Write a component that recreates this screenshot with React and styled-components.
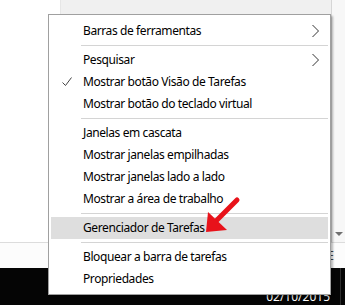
import React from 'react';
import styled, { createGlobalStyle } from 'styled-components';

const GlobalStyle = createGlobalStyle`
  html, body {
    margin: 0;
    padding: 0;
    width: 345px;
    height: 305px;
    overflow: hidden;
    background: #fff;
    font-family: "Noto Sans", "Open Sans", sans-serif;
  }
`;

const Screen = styled.div`
  position: relative;
  width: 345px;
  height: 305px;
  display: flex;
  flex-direction: column;
  overflow: hidden;
`;

const Workspace = styled.div`
  display: flex;
  height: 242px;
  border-bottom: 1px solid #dcdcdc;
`;

const SidePane = styled.div`
  width: 60px;
  background: #fff;
  border-right: 1px solid #e6e6e6;
`;

const MainPane = styled.div`
  flex: 1;
  background: #f0f0f0;
`;

const RightStrip = styled.div`
  width: 13px;
  background: #f7f7f7;
  border-left: 1px solid #d6d6d6;
  display: flex;
  flex-direction: column;
  justify-content: flex-end;
  align-items: center;
  padding-bottom: 3px;
`;

const DropArrow = styled.div`
  width: 0;
  height: 0;
  border-left: 4px solid transparent;
  border-right: 4px solid transparent;
  border-top: 4px solid #707070;
  margin-bottom: 3px;
`;

const StatusStrip = styled.div`
  height: 25px;
  background: #fcfcfc;
  display: flex;
  justify-content: flex-end;
  align-items: center;
  padding-right: 11px;
  font-size: 12px;
  color: #444;
`;

const Taskbar = styled.div`
  flex: 1;
  background: #050505;
  display: flex;
  justify-content: flex-end;
  align-items: flex-end;
`;

const Clock = styled.div`
  color: #fff;
  font-size: 12px;
  line-height: 14px;
  padding: 0 10px 1px 0;
  margin-right: 4px;
  border-right: 1px solid #2e2e2e;
  align-self: stretch;
  display: flex;
  flex-direction: column;
  justify-content: flex-end;
`;

const Menu = styled.div`
  position: absolute;
  left: 48px;
  top: 14px;
  width: 283px;
  box-sizing: border-box;
  background: #fff;
  border: 1px solid #a0a0a0;
  box-shadow: 2px 2px 2px rgba(0, 0, 0, 0.28);
  padding: 5px 2px 4px 2px;
  font-size: 12px;
  letter-spacing: -0.4px;
  color: #000;
`;

const Item = styled.div`
  position: relative;
  height: 22px;
  line-height: 22px;
  padding-left: 32px;
  white-space: nowrap;
  background: ${({ $active }) => ($active ? '#dedede' : 'transparent')};
`;

const Separator = styled.div`
  height: 1px;
  background: #d4d4d4;
  margin: 3px 0 3px 30px;
`;

const Mark = styled.svg`
  position: absolute;
  top: 0;
  ${({ $right }) => ($right ? 'right: 8px;' : 'left: 10px;')}
`;

const Pointer = styled.svg`
  position: absolute;
  left: 200px;
  top: 196px;
`;

const Check = () => (
  <Mark width="12" height="22" viewBox="0 0 12 22">
    <polyline points="1.5,11.5 4.5,14.5 10.5,6.5" fill="none" stroke="#444" strokeWidth="1" />
  </Mark>
);

const Chevron = () => (
  <Mark $right width="10" height="22" viewBox="0 0 10 22">
    <polyline points="2.5,5 8.5,11 2.5,17" fill="none" stroke="#333" strokeWidth="1" />
  </Mark>
);

export default function App() {
  return (
    <Screen>
      <GlobalStyle />
      <Workspace>
        <SidePane />
        <MainPane />
        <RightStrip>
          <DropArrow />
        </RightStrip>
      </Workspace>
      <StatusStrip>E</StatusStrip>
      <Taskbar>
        <Clock>02/10/2015</Clock>
      </Taskbar>

      <Menu>
        <Item>
          Barras de ferramentas
          <Chevron />
        </Item>
        <Separator />
        <Item>
          Pesquisar
          <Chevron />
        </Item>
        <Item>
          <Check />
          Mostrar botão Visão de Tarefas
        </Item>
        <Item>Mostrar botão do teclado virtual</Item>
        <Separator />
        <Item>Janelas em cascata</Item>
        <Item>Mostrar janelas empilhadas</Item>
        <Item>Mostrar janelas lado a lado</Item>
        <Item>Mostrar a área de trabalho</Item>
        <Separator />
        <Item $active>Gerenciador de Tarefas</Item>
        <Separator />
        <Item>Bloquear a barra de tarefas</Item>
        <Item>Propriedades</Item>
      </Menu>

      <Pointer width="45" height="40" viewBox="0 0 45 40">
        <line x1="37" y1="4" x2="17" y2="24" stroke="#e8121a" strokeWidth="5" strokeLinecap="round" />
        <polygon points="6,36 8,16 27,34" fill="#e8121a" />
      </Pointer>
    </Screen>
  );
}
